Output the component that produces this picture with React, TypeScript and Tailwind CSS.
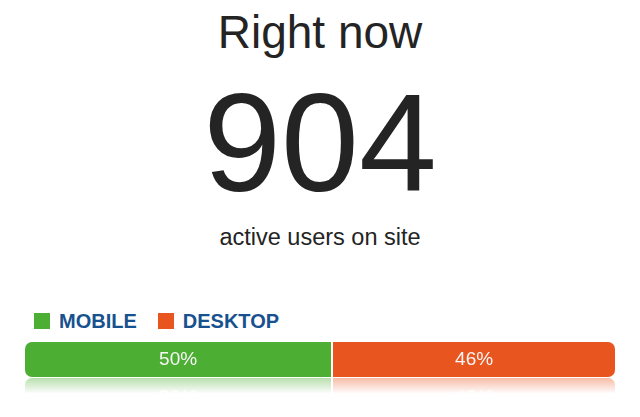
import React from 'react';

const segments = [
  { label: '50%', value: 50, color: 'bg-[#4caf34]' },
  { label: '46%', value: 46, color: 'bg-[#e9551f]' },
];

const App = () => {
  return (
    <div className="w-[640px] h-[417px] bg-white overflow-hidden font-['Liberation_Sans',Arial,sans-serif] text-[#242424]">
      <div className="flex flex-col items-center">
        <h1 className="mt-[9px] text-[46px] leading-[46px] font-normal">Right now</h1>
        <div className="mt-[18px] text-[140px] leading-[140px]">904</div>
        <p className="mt-[13px] text-[23.5px] leading-[23px]">active users on site</p>
      </div>

      <div className="px-[25px]">
        <div className="mt-[62px] pl-[9px] flex items-center text-[20px] leading-[20px] font-bold text-[#17528f]">
          <span className="w-4 h-4 bg-[#4caf34]" />
          <span className="ml-[9px]">MOBILE</span>
          <span className="ml-[21px] w-4 h-4 bg-[#e9551f]" />
          <span className="ml-[9px]">DESKTOP</span>
        </div>

        <div className="mt-[11px] h-[35px] flex gap-[2px] rounded-[7px] overflow-hidden [-webkit-box-reflect:below_1px_linear-gradient(transparent_55%,rgba(255,255,255,0.4))]">
          {segments.map((s) => (
            <div
              key={s.label}
              className={`${s.color} flex items-center justify-center text-[19px] text-[#f6f6f6]`}
              style={{ flexGrow: s.value, flexBasis: 0 }}
            >
              {s.label}
            </div>
          ))}
        </div>
      </div>
    </div>
  );
};

export default App;
